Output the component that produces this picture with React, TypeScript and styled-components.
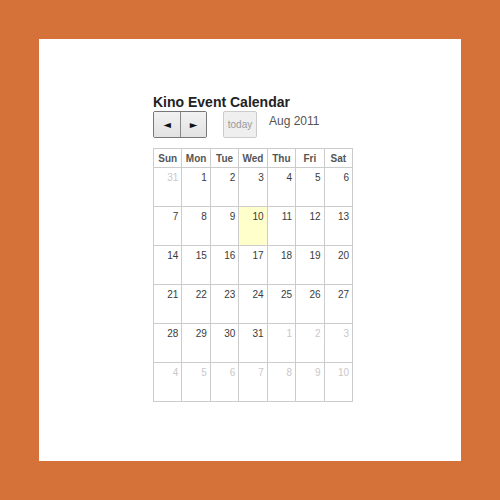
import React from 'react';
import styled, { createGlobalStyle } from 'styled-components';

const GlobalStyle = createGlobalStyle`
  html, body { margin: 0; padding: 0; }
  body { font-family: "Liberation Sans", Arial, sans-serif; }
`;

const Page = styled.div`
  width: 500px;
  height: 500px;
  box-sizing: border-box;
  padding: 39px;
  background: #d5723a;
`;

const Panel = styled.div`
  width: 422px;
  height: 422px;
  box-sizing: border-box;
  background: #fff;
  padding: 55px 0 0 114px;
`;

const Title = styled.h2`
  margin: 0;
  font-size: 14px;
  line-height: 17px;
  font-weight: bold;
  color: #222;
`;

const Toolbar = styled.div`
  display: flex;
  align-items: flex-start;
  height: 27px;
`;

const ButtonGroup = styled.div`
  display: flex;
  border: 1px solid #777;
  border-radius: 2px;
  overflow: hidden;
`;

const NavButton = styled.button<{ $first?: boolean }>`
  width: 26px;
  height: 25px;
  padding: 0;
  border: none;
  border-left: ${(p) => (p.$first ? 'none' : '1px solid #888')};
  background: linear-gradient(#f2f2f2, #e2e2e2);
  font-size: 10px;
  color: #111;
  font-family: "DejaVu Sans", sans-serif;
  display: flex;
  align-items: center;
  justify-content: center;
`;

const TodayButton = styled.button`
  margin-left: 16px;
  width: 34px;
  height: 27px;
  padding: 0;
  border: 1px solid #ccc;
  border-radius: 2px;
  background: #efefef;
  color: #999;
  font-family: "Liberation Sans", Arial, sans-serif;
  font-size: 10px;
`;

const MonthLabel = styled.div`
  margin-left: 12px;
  margin-top: 3px;
  font-size: 12px;
  color: #555;
`;

const Grid = styled.table`
  margin-top: 10px;
  width: 200px;
  table-layout: fixed;
  border-collapse: collapse;
  font-size: 10px;
`;

const HeadCell = styled.th`
  height: 18px;
  padding: 0;
  border: 1px solid #ccc;
  color: #555;
  font-weight: bold;
  text-align: center;
`;

const DayCell = styled.td<{ $other?: boolean; $today?: boolean }>`
  height: 39px;
  padding: 4px 3px 0 0;
  box-sizing: border-box;
  vertical-align: top;
  text-align: right;
  border: 1px solid #ccc;
  color: ${(p) => (p.$other ? '#c8c8c8' : '#3a3a3a')};
  background: ${(p) => (p.$today ? '#ffffcc' : '#fff')};
`;

const days = ['Sun', 'Mon', 'Tue', 'Wed', 'Thu', 'Fri', 'Sat'];

const weeks: { n: number; other?: boolean }[][] = [];
{
  const cells: { n: number; other?: boolean }[] = [{ n: 31, other: true }];
  for (let i = 1; i <= 31; i++) cells.push({ n: i });
  for (let i = 1; i <= 10; i++) cells.push({ n: i, other: true });
  for (let w = 0; w < 6; w++) weeks.push(cells.slice(w * 7, w * 7 + 7));
}

export default function App() {
  return (
    <Page>
      <GlobalStyle />
      <Panel>
        <Title>Kino Event Calendar</Title>
        <Toolbar>
          <ButtonGroup>
            <NavButton $first>◄</NavButton>
            <NavButton>►</NavButton>
          </ButtonGroup>
          <TodayButton disabled>today</TodayButton>
          <MonthLabel>Aug 2011</MonthLabel>
        </Toolbar>
        <Grid>
          <thead>
            <tr>
              {days.map((d) => (
                <HeadCell key={d}>{d}</HeadCell>
              ))}
            </tr>
          </thead>
          <tbody>
            {weeks.map((week, wi) => (
              <tr key={wi}>
                {week.map((c, ci) => (
                  <DayCell
                    key={ci}
                    $other={c.other}
                    $today={!c.other && c.n === 10}
                  >
                    {c.n}
                  </DayCell>
                ))}
              </tr>
            ))}
          </tbody>
        </Grid>
      </Panel>
    </Page>
  );
}
